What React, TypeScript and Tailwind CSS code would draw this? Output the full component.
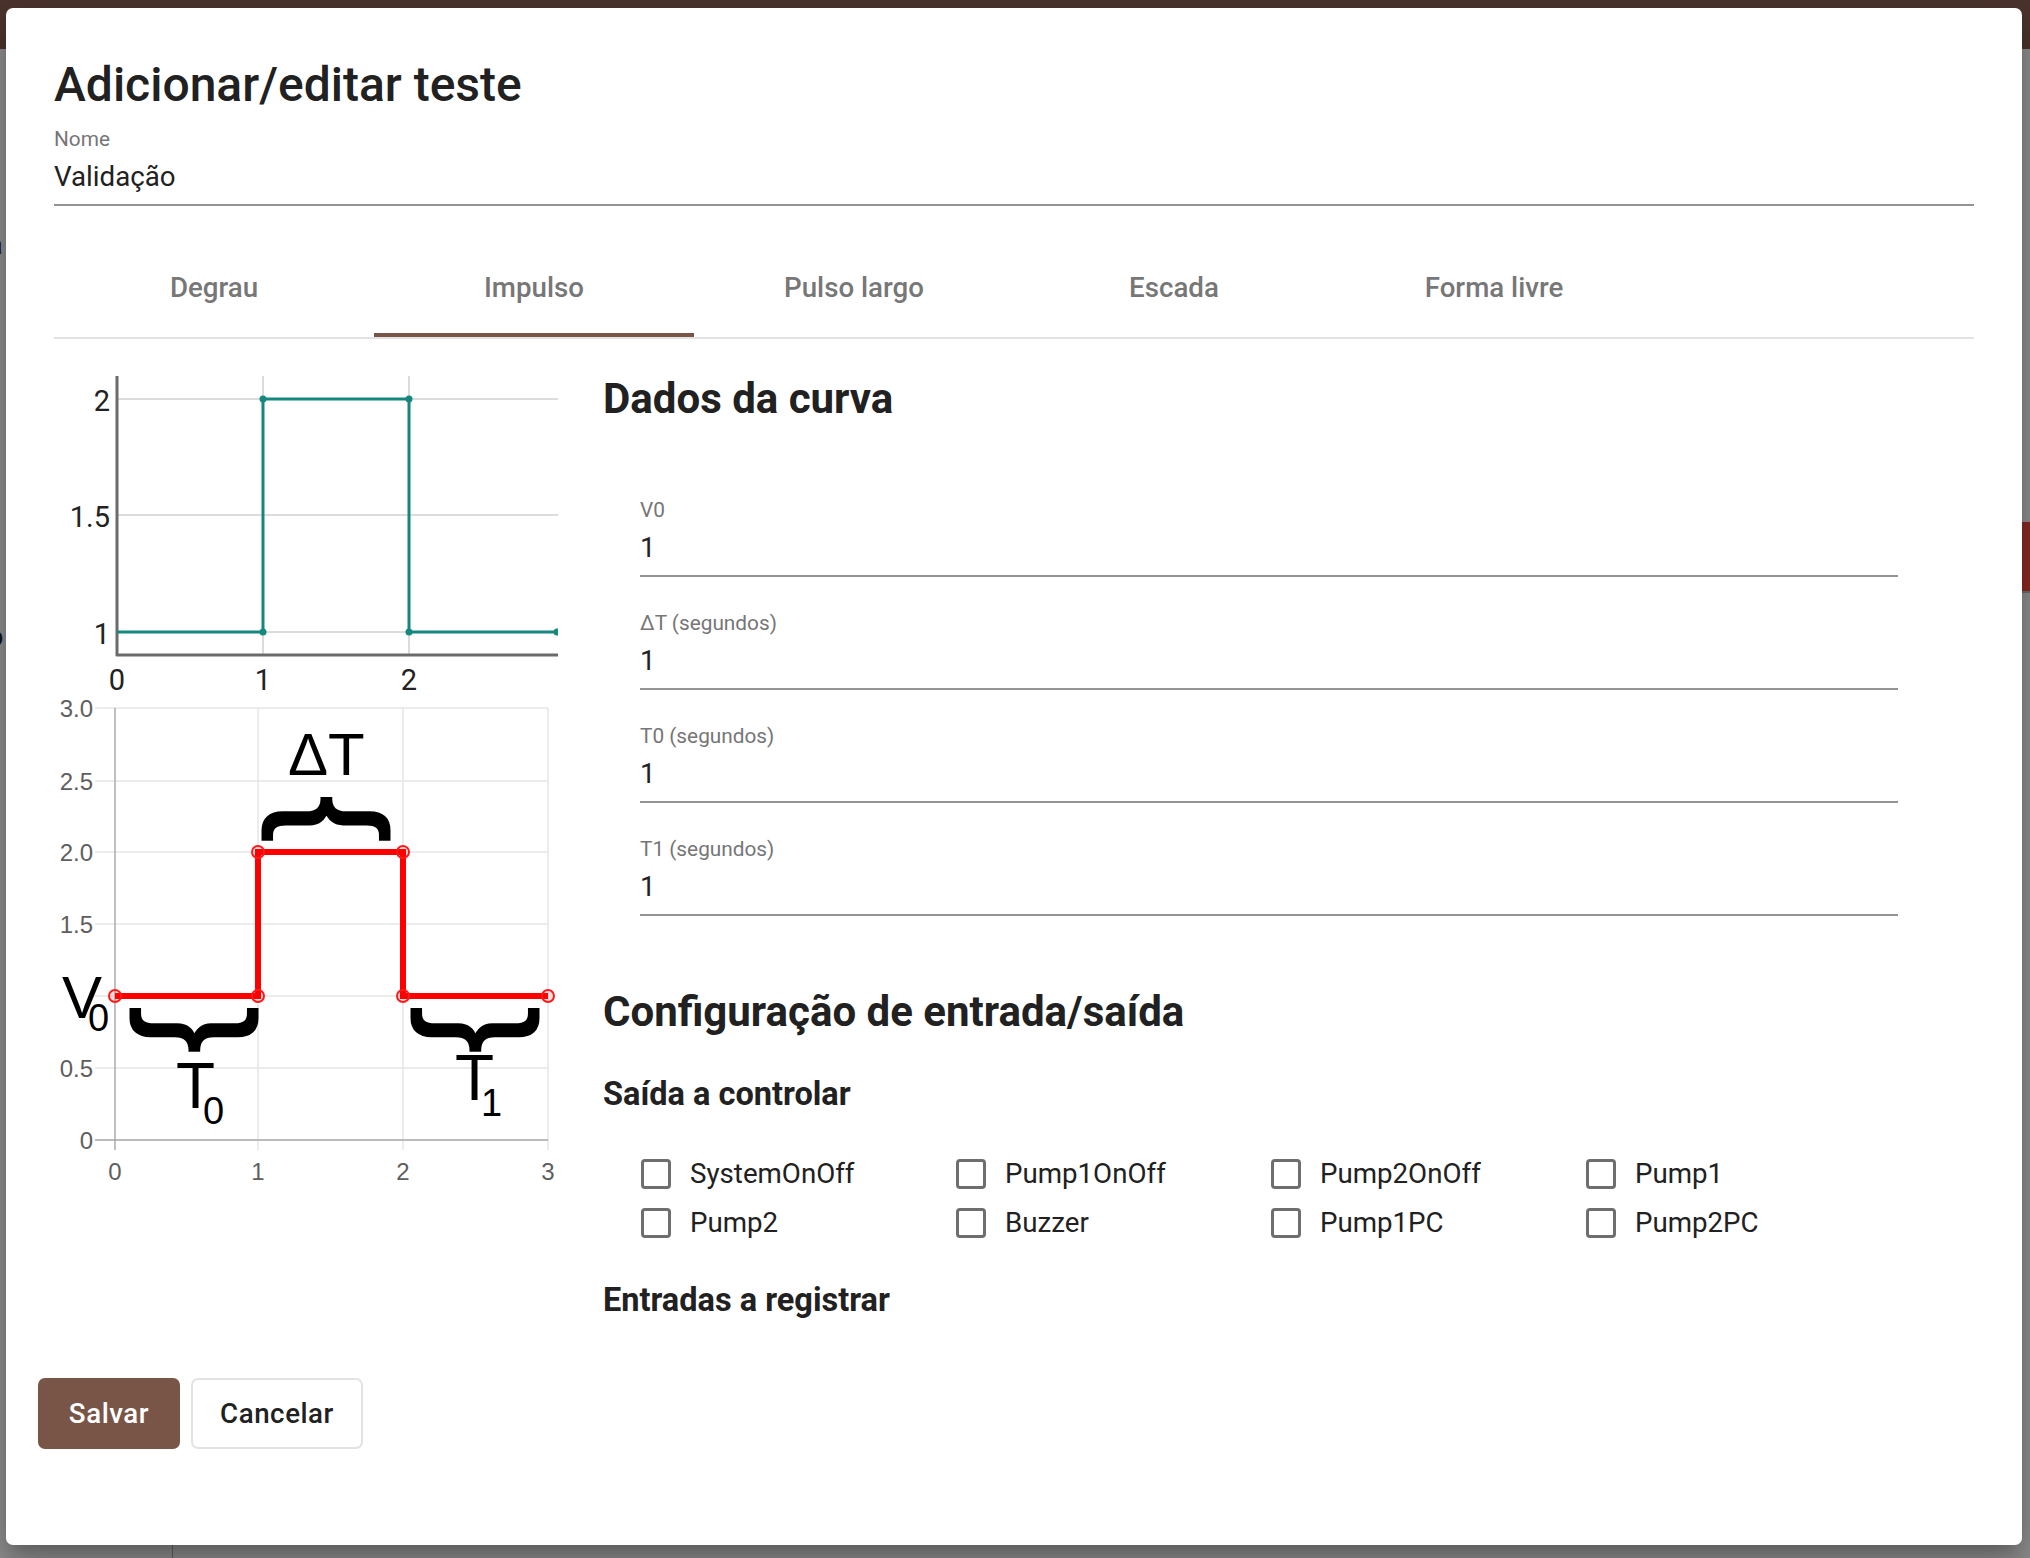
import React from 'react';

const tabs = ['Degrau', 'Impulso', 'Pulso largo', 'Escada', 'Forma livre'];

const curveFields = [
  { label: 'V0', value: '1' },
  { label: 'ΔT (segundos)', value: '1' },
  { label: 'T0 (segundos)', value: '1' },
  { label: 'T1 (segundos)', value: '1' },
];

const outputs = ['SystemOnOff', 'Pump1OnOff', 'Pump2OnOff', 'Pump1', 'Pump2', 'Buzzer', 'Pump1PC', 'Pump2PC'];

// Underlined text field (label + value + bottom line)
function Field({ label, value, className = '' }: { label: string; value: string; className?: string }) {
  return (
    <div className={className}>
      <div className="text-[20.8px] leading-[24px] text-[#767676]">{label}</div>
      <div className="mt-[10px] text-[27.7px] leading-[32px] text-[#212121]">{value}</div>
      <div className="mt-[11px] h-[2px] bg-[#949494]" />
    </div>
  );
}

function Checkbox({ label }: { label: string }) {
  return (
    <label className="flex h-[49px] items-center">
      <span className="h-[30px] w-[30px] shrink-0 rounded-[4px] border-[3px] border-[#6e6e6e]" />
      <span className="ml-[19px] text-[27.7px] leading-[32px] text-[#212121]">{label}</span>
    </label>
  );
}

function PreviewChart() {
  const teal = '#16877f';
  return (
    <svg width="504" height="330" className="block overflow-hidden">
      <g stroke="#dcdcdc" strokeWidth="2">
        <line x1="63" y1="39" x2="504" y2="39" />
        <line x1="63" y1="155" x2="504" y2="155" />
        <line x1="63" y1="272" x2="504" y2="272" />
        <line x1="209" y1="16" x2="209" y2="295" />
        <line x1="355" y1="16" x2="355" y2="295" />
      </g>
      <g stroke="#6b6b6b" strokeWidth="3">
        <line x1="63" y1="16" x2="63" y2="296" />
        <line x1="62" y1="295" x2="504" y2="295" />
      </g>
      <path d="M63 272 H209 V39 H355 V272 H503" fill="none" stroke={teal} strokeWidth="3" />
      {[
        [209, 272],
        [209, 39],
        [355, 39],
        [355, 272],
        [503, 272],
      ].map(([x, y]) => (
        <circle key={`${x}-${y}`} cx={x} cy={y} r="3.5" fill={teal} />
      ))}
      <g fontFamily="Roboto, sans-serif" fontSize="29" fill="#222">
        <text x="56" y="51" textAnchor="end">2</text>
        <text x="56" y="167" textAnchor="end">1.5</text>
        <text x="56" y="284" textAnchor="end">1</text>
        <text x="63" y="330" textAnchor="middle">0</text>
        <text x="209" y="330" textAnchor="middle">1</text>
        <text x="355" y="330" textAnchor="middle">2</text>
      </g>
    </svg>
  );
}

// Annotated explanation of the impulse parameters
function ExplainChart() {
  const xs = [61, 204, 349, 494];
  const ys = [
    { y: 18, t: '3.0' },
    { y: 91, t: '2.5' },
    { y: 162, t: '2.0' },
    { y: 234, t: '1.5' },
    { y: 306, t: '' },
    { y: 378, t: '0.5' },
    { y: 450, t: '0' },
  ];
  const pts = [
    [61, 306],
    [204, 306],
    [204, 162],
    [349, 162],
    [349, 306],
    [494, 306],
  ];
  return (
    <svg width="504" height="500" className="block">
      <g stroke="#e6e6e6" strokeWidth="1.5">
        {ys.map(({ y }) => (
          <line key={y} x1="41" y1={y} x2="494" y2={y} />
        ))}
        {xs.slice(1).map((x) => (
          <line key={x} x1={x} y1="18" x2={x} y2="460" />
        ))}
      </g>
      <g stroke="#ababab" strokeWidth="1.5">
        <line x1="61" y1="18" x2="61" y2="460" />
        <line x1="41" y1="450" x2="494" y2="450" />
      </g>
      <g fontFamily="'Liberation Sans', Arial, sans-serif" fontSize="24" fill="#5e5e5e">
        {ys.map(({ y, t }) =>
          t ? (
            <text key={t} x="39" y={y + 9} textAnchor="end">
              {t}
            </text>
          ) : null,
        )}
        {xs.map((x, i) => (
          <text key={x} x={x} y="490" textAnchor="middle">
            {i}
          </text>
        ))}
      </g>
      <path d="M61 306 H204 V162 H349 V306 H494" fill="none" stroke="#ff0000" strokeWidth="6" />
      {pts.map(([x, y]) => (
        <circle key={`${x}-${y}`} cx={x} cy={y} r="6" fill="rgba(255,0,0,0.12)" stroke="#ff1a1a" strokeWidth="2" />
      ))}
      <g fontFamily="'Liberation Sans', Arial, sans-serif" fill="#000">
        <text x="234" y="85" fontSize="60">ΔT</text>
        <g stroke="#000" strokeWidth="3">
          <text transform="translate(237 129) rotate(90)" fontSize="136" textAnchor="middle">{'{'}</text>
          <text transform="translate(104.5 340) rotate(90)" fontSize="136" textAnchor="middle">{'}'}</text>
          <text transform="translate(386 340) rotate(90)" fontSize="136" textAnchor="middle">{'}'}</text>
        </g>
        <text x="8" y="328" fontSize="60">V</text>
        <text x="34" y="341" fontSize="38">0</text>
        <text x="122" y="418" fontSize="64">T</text>
        <text x="149" y="434" fontSize="38">0</text>
        <text x="401" y="410" fontSize="64">T</text>
        <text x="427" y="426" fontSize="38">1</text>
      </g>
    </svg>
  );
}

export default function App() {
  return (
    <div className="relative h-[1558px] w-[2030px] overflow-hidden bg-[#8f8f8f] font-[Roboto,sans-serif]">
      {/* page behind the dialog */}
      <div className="flex h-full flex-col">
        <div className="h-[49px] shrink-0 bg-[#4d342e]" />
        <div className="flex flex-1">
          <div className="w-[173px] border-r border-[#626262]">
            <div className="-ml-[12px] pt-[180px] text-[27px] leading-[32px] text-[#151515]">a</div>
            <div className="-ml-[12px] pt-[360px] text-[27px] leading-[32px] text-[#151515]">o</div>
          </div>
          <div className="flex flex-1 justify-end">
            <div className="mt-[473px] h-[71px] w-[10px] border-b-2 border-[#6d6d6d] bg-[#8b2a23]" />
          </div>
        </div>
      </div>

      {/* dialog */}
      <div className="absolute left-[6px] top-[8px] flex h-[1537px] w-[2016px] flex-col rounded-[7px] bg-white shadow-[0_11px_15px_-7px_rgba(0,0,0,0.2),0_24px_38px_3px_rgba(0,0,0,0.14),0_9px_46px_8px_rgba(0,0,0,0.12)]">
        <div className="px-[48px] pt-[49px]">
          <h2 className="text-[48px] font-medium leading-[56px] text-[#212121]">Adicionar/editar teste</h2>

          <Field label="Nome" value="Validação" className="mt-[14px]" />

          <div className="mt-[48px] flex border-b-2 border-[#e3e3e3]">
            {tabs.map((tab) => (
              <div
                key={tab}
                className={`h-[83px] w-[320px] pt-[18px] text-center text-[27.7px] font-medium leading-[32px] text-[#777] ${
                  tab === 'Impulso' ? 'border-b-[4px] border-[#795548]' : ''
                }`}
              >
                {tab}
              </div>
            ))}
          </div>

          <div className="flex">
            <div className="flex w-[549px] shrink-0 flex-col pt-[21px]">
              <PreviewChart />
              <ExplainChart />
            </div>

            <div className="flex-1 pt-[36px]">
              <h3 className="text-[42px] font-bold leading-[48px] text-[#212121]">Dados da curva</h3>
              <div className="ml-[37px] mt-[75px] flex w-[1258px] flex-col gap-[34px]">
                {curveFields.map((f) => (
                  <Field key={f.label} label={f.label} value={f.value} />
                ))}
              </div>

              <h3 className="mt-[72px] text-[42px] font-bold leading-[48px] text-[#212121]">
                Configuração de entrada/saída
              </h3>
              <h4 className="mt-[38px] text-[32.5px] font-bold leading-[40px] text-[#212121]">Saída a controlar</h4>
              <div className="ml-[38px] mt-[35px] grid grid-cols-[repeat(4,315px)]">
                {outputs.map((o) => (
                  <Checkbox key={o} label={o} />
                ))}
              </div>
              <h4 className="mt-[33px] text-[32.5px] font-bold leading-[40px] text-[#212121]">Entradas a registrar</h4>
            </div>
          </div>
        </div>

        <div className="mt-[58px] flex gap-[11px] pl-[32px]">
          <button className="h-[71px] w-[142px] rounded-[7px] bg-[#795548] text-[27.7px] font-medium tracking-[0.02em] text-white">
            Salvar
          </button>
          <button className="h-[71px] w-[172px] rounded-[7px] border-2 border-[#e3e3e3] bg-white text-[27.7px] font-medium tracking-[0.02em] text-[#212121]">
            Cancelar
          </button>
        </div>
      </div>
    </div>
  );
}
